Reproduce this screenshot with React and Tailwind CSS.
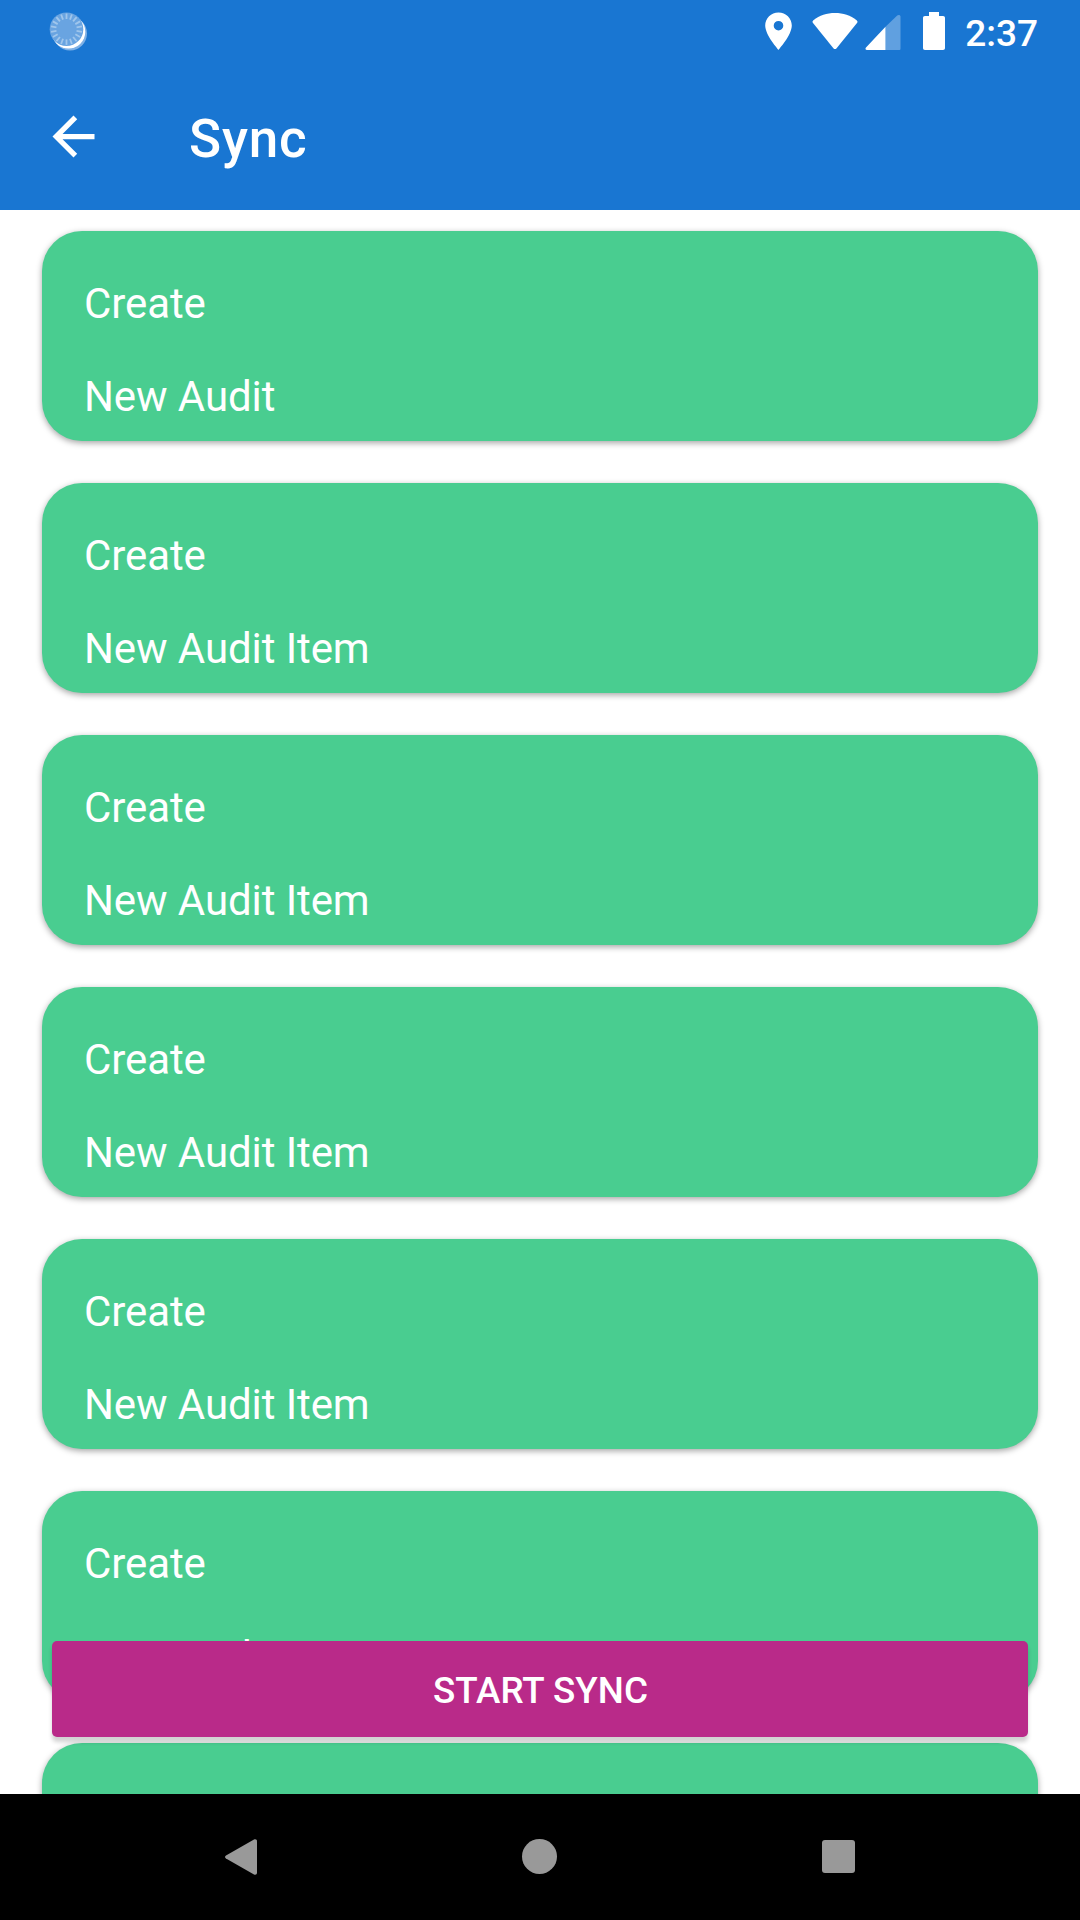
const tasks = [
  { id: 1, action: 'Create', name: 'New Audit' },
  { id: 2, action: 'Create', name: 'New Audit Item' },
  { id: 3, action: 'Create', name: 'New Audit Item' },
  { id: 4, action: 'Create', name: 'New Audit Item' },
  { id: 5, action: 'Create', name: 'New Audit Item' },
  { id: 6, action: 'Create', name: 'New Audit Item' },
  { id: 7, action: 'Create', name: 'New Audit Item' },
];

// 18 short ticks around the spinner disc
const ticks = Array.from({ length: 18 }, (_, i) => i * 20);

const Spinner = () => (
  <svg width="40" height="40" viewBox="0 0 40 40" className="shrink-0">
    <circle cx="22" cy="21.5" r="17" fill="#7fb1e6" />
    <circle cx="20.5" cy="19.8" r="16.8" fill="#fff" />
    <circle cx="18.5" cy="17.2" r="16.8" fill="#69a4e1" />
    {ticks.map((angle) => (
      <path key={angle} d="M18.5 1.5V7" stroke="#a0c6ec" strokeWidth="1.8" transform={`rotate(${angle} 18.5 17.2)`} />
    ))}
  </svg>
);

const StatusBar = () => (
  <div className="flex h-[63px] items-start pl-12 pr-[42px] pt-3">
    <Spinner />
    <div className="ml-auto flex items-start">
      {/* Location */}
      <svg width="27" height="38" viewBox="0 0 27 38" fill="#fff">
        <path fillRule="evenodd" d="M13.5.5C6.1.5.2 6.3.2 13.6c0 9.7 13.3 24.3 13.3 24.3s13.3-14.6 13.3-24.3C26.8 6.3 20.9.5 13.5.5zm0 8.4a4.8 4.8 0 1 1 0 9.6a4.8 4.8 0 0 1 0-9.6z" />
      </svg>
      {/* Wifi */}
      <svg width="46" height="38" viewBox="0 0 46 38" fill="#fff" className="ml-5">
        <path d="M1.4 8.2C7.5 3.5 14.8 1 23 1s15.5 2.5 21.6 7.2c1 .8 1.2 1.8.4 2.8L24.6 36.2c-1 1.2-2.2 1.2-3.2 0L1 11c-.8-1-.6-2 .4-2.8z" />
      </svg>
      {/* Signal */}
      <svg width="36" height="38" viewBox="0 0 36 38" className="ml-[7px]">
        <path d="M20.5 14.7 32.2 3.500c1.400-1.200 3.300-.5 3.300 1.200v31.800c0 1-.5 1.500-1.500 1.500H20.500z" fill="#60a0e0" />
        <path d="M20.5 14.700V38H2c-1.500 0-2-1.500-1-2.500z" fill="#fff" />
      </svg>
      {/* Battery */}
      <svg width="22" height="38" viewBox="0 0 22 38" fill="#fff" className="ml-[22px]">
        <path d="M6 0h10v4h4c1.300 0 2 .7 2 2v30c0 1.300-.7 2-2 2H2c-1.300 0-2-.7-2-2V6c0-1.300.7-2 2-2h4z" />
      </svg>
      <span className="ml-5 text-[37px] font-medium leading-[43px]">2:37</span>
    </div>
  </div>
);

const Header = () => (
  <header className="flex h-[147px] items-center pl-[42px]">
    <svg width="63" height="63" viewBox="0 0 24 24" fill="#fff">
      <path d="M20 11H7.830l5.590-5.590L12 4l-8 8 8 8 1.410-1.410L7.830 13H20v-2z" />
    </svg>
    <h1 className="ml-[84px] pt-[5px] text-[53px] font-medium leading-[62px] tracking-[0.8px]">Sync</h1>
  </header>
);

const TaskCard = ({ action, name }) => (
  <div className="flex h-[210px] shrink-0 flex-col gap-11 rounded-[40px] bg-[#49cd90] px-[42px] pt-12 text-[42px] leading-[49px] tracking-[-0.09px] text-white shadow-[0_2px_6px_rgba(0,0,0,0.36)]">
    <p>{action}</p>
    <p>{name}</p>
  </div>
);

const NavBar = () => (
  <nav className="flex h-[126px] shrink-0 items-center justify-between bg-black px-[225px] pb-px">
    <svg width="32" height="36" viewBox="0 0 32 36" fill="#999">
      <path d="M1 16.400 29 .6c1.500-.8 3 0 3 1.600v31.600c0 1.600-1.500 2.400-3 1.600L1 19.600c-1.300-.8-1.300-2.400 0-3.200z" />
    </svg>
    <div className="size-[35px] rounded-full bg-[#999]" />
    <div className="size-[33px] rounded-[3px] bg-[#999]" />
  </nav>
);

const App = () => {
  return (
    <div className="flex h-[1920px] w-[1080px] flex-col overflow-hidden bg-white font-['Roboto',sans-serif]">
      <div className="shrink-0 bg-[#1976d2] text-white">
        <StatusBar />
        <Header />
      </div>

      <main className="relative min-h-0 flex-1 overflow-hidden">
        <div className="flex flex-col gap-[42px] px-[42px] pt-[21px]">
          {tasks.map((task) => (
            <TaskCard key={task.id} action={task.action} name={task.name} />
          ))}
        </div>

        {/* Floating button over the list */}
        <button className="absolute inset-x-[52px] bottom-[57px] h-24 rounded-[5px] bg-[#b92a89] pl-px pt-[3px] text-[36.8px] font-medium text-white shadow-[0_5px_4px_rgba(0,0,0,0.18)]">
          START SYNC
        </button>
      </main>

      <NavBar />
    </div>
  );
};

export default App;
